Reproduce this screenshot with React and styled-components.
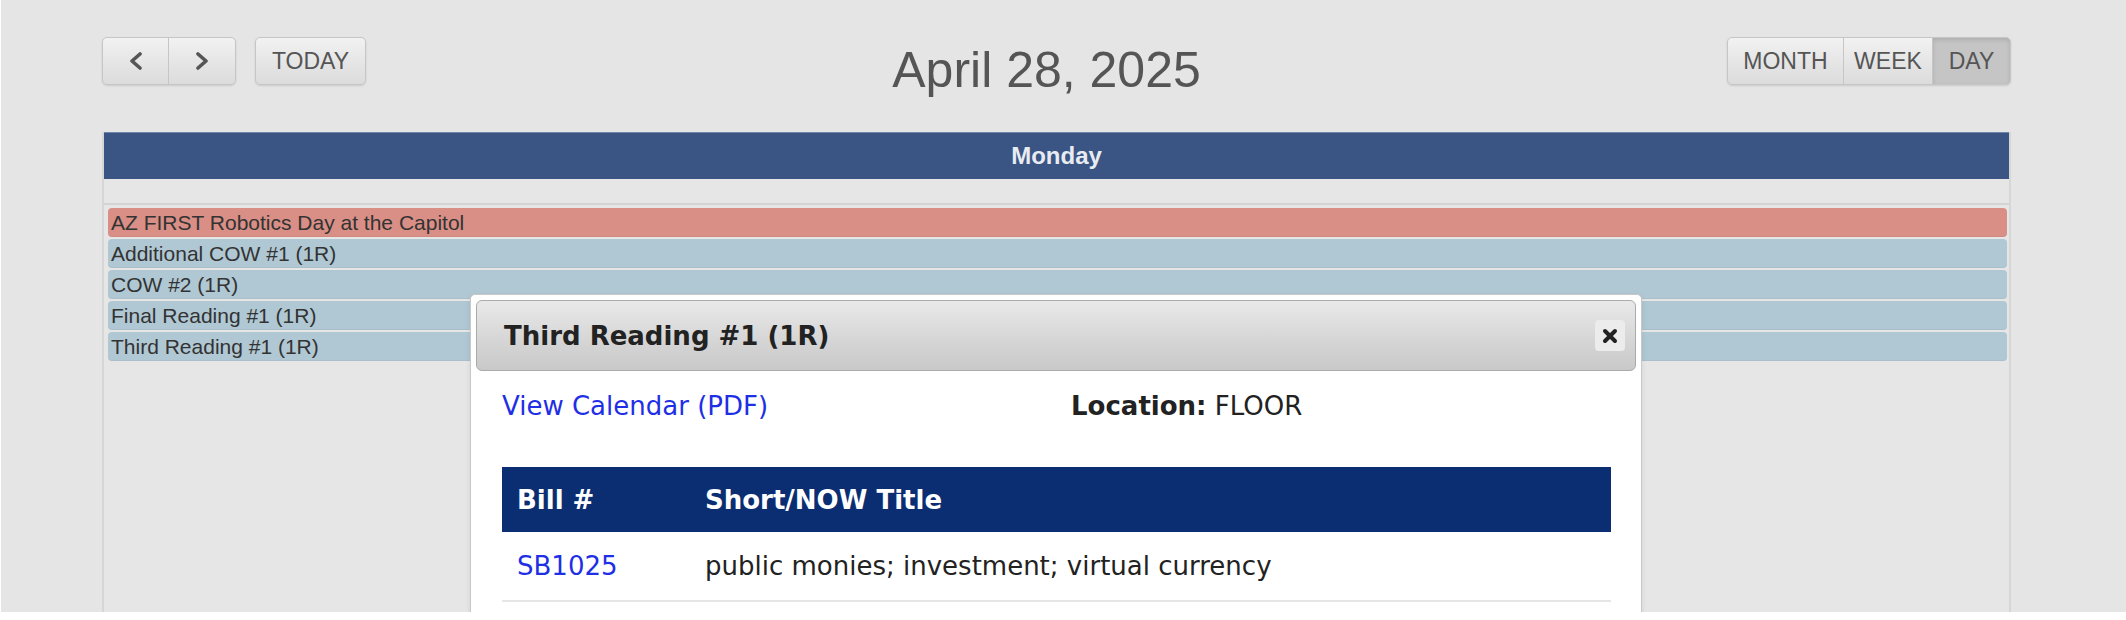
import React from "react";
import styled, { createGlobalStyle } from "styled-components";

const GlobalStyle = createGlobalStyle`
  html, body {
    margin: 0;
    padding: 0;
    background: #ffffff;
  }
  body {
    font-family: "Liberation Sans", Arial, sans-serif;
  }
`;

const events = [
  { title: "AZ FIRST Robotics Day at the Capitol", kind: "red" },
  { title: "Additional COW #1 (1R)", kind: "blue" },
  { title: "COW #2 (1R)", kind: "blue" },
  { title: "Final Reading #1 (1R)", kind: "blue" },
  { title: "Third Reading #1 (1R)", kind: "blue" },
];

const bills = [
  { number: "SB1025", title: "public monies; investment; virtual currency" },
];

const Chevron = ({ dir }) => (
  <svg width="16" height="18" viewBox="0 0 16 18">
    <polyline
      points={dir === "left" ? "12,2 4,9 12,16" : "4,2 12,9 4,16"}
      fill="none"
      stroke="#555"
      strokeWidth="3.6"
      strokeLinecap="round"
      strokeLinejoin="round"
    />
  </svg>
);

const CloseIcon = () => (
  <svg width="16" height="16" viewBox="0 0 16 16">
    <path
      d="M3 3 L13 13 M13 3 L3 13"
      stroke="#222"
      strokeWidth="4"
      strokeLinecap="round"
    />
  </svg>
);

const App = () => {
  return (
    <Page>
      <GlobalStyle />
      <Toolbar>
        <Left>
          <ButtonGroup>
            <Button $w={67}>
              <Chevron dir="left" />
            </Button>
            <Button $w={68}>
              <Chevron dir="right" />
            </Button>
          </ButtonGroup>
          <ButtonGroup>
            <Button $w={111}>TODAY</Button>
          </ButtonGroup>
        </Left>
        <Title>April 28, 2025</Title>
        <ButtonGroup>
          <Button $w={117}>MONTH</Button>
          <Button $w={90}>WEEK</Button>
          <Button $w={79} $active>
            DAY
          </Button>
        </ButtonGroup>
      </Toolbar>

      <Calendar>
        <DayHeader>Monday</DayHeader>
        <AllDayRow />
        <EventList>
          {events.map((ev) => (
            <EventBar key={ev.title} $kind={ev.kind}>
              {ev.title}
            </EventBar>
          ))}
        </EventList>
      </Calendar>

      <Modal>
        <ModalHeader>
          <ModalTitle>Third Reading #1 (1R)</ModalTitle>
          <CloseButton aria-label="close">
            <CloseIcon />
          </CloseButton>
        </ModalHeader>
        <ModalBody>
          <InfoRow>
            <Link href="#">View Calendar (PDF)</Link>
            <span>
              <strong>Location:</strong> FLOOR
            </span>
          </InfoRow>
          <BillTable>
            <colgroup>
              <col style={{ width: "188px" }} />
              <col />
            </colgroup>
            <thead>
              <tr>
                <Th>Bill #</Th>
                <Th>Short/NOW Title</Th>
              </tr>
            </thead>
            <tbody>
              {bills.map((b) => (
                <tr key={b.number}>
                  <Td>
                    <Link href="#">{b.number}</Link>
                  </Td>
                  <Td>{b.title}</Td>
                </tr>
              ))}
            </tbody>
          </BillTable>
        </ModalBody>
      </Modal>
    </Page>
  );
};

const Page = styled.div`
  position: relative;
  height: 612px;
  margin-left: 1px;
  box-sizing: border-box;
  padding: 37px 115px 0 101px;
  background: #e5e5e5;
  overflow: hidden;
  display: flex;
  flex-direction: column;
`;

const Toolbar = styled.div`
  display: flex;
  justify-content: space-between;
  align-items: flex-start;
  height: 48px;
`;

const Left = styled.div`
  display: flex;
  gap: 19px;
`;

const ButtonGroup = styled.div`
  display: flex;
  border-radius: 5px;
  box-shadow: 0 1px 2px rgba(0, 0, 0, 0.12);
`;

const Button = styled.button`
  width: ${(p) => p.$w}px;
  height: 48px;
  box-sizing: border-box;
  display: flex;
  align-items: center;
  justify-content: center;
  padding: 0;
  border: 1px solid #c6c6c6;
  background: ${(p) =>
    p.$active
      ? "#c5c5c5"
      : "linear-gradient(to bottom, #f2f2f2 0%, #e4e4e4 60%, #dcdcdc 100%)"};
  box-shadow: ${(p) =>
    p.$active ? "inset 0 2px 4px rgba(0, 0, 0, 0.12)" : "none"};
  color: #555;
  font-family: "Liberation Sans", Arial, sans-serif;
  font-size: 23px;
  cursor: pointer;
  & + & {
    margin-left: -1px;
  }
  &:first-child {
    border-radius: 5px 0 0 5px;
  }
  &:last-child {
    border-radius: 0 5px 5px 0;
  }
  &:only-child {
    border-radius: 5px;
  }
`;

const Title = styled.h2`
  margin: 8px 0 0;
  font-family: "Liberation Sans", Arial, sans-serif;
  font-size: 50px;
  line-height: 50px;
  font-weight: normal;
  color: #555;
`;

const Calendar = styled.div`
  flex: 1;
  margin-top: 47px;
  border-left: 2px solid #d6d6d6;
  border-right: 2px solid #d6d6d6;
  background: #e6e6e6;
  display: flex;
  flex-direction: column;
`;

const DayHeader = styled.div`
  height: 47px;
  display: flex;
  align-items: center;
  justify-content: center;
  background: #3a5583;
  border-top: 1px solid #6f86ab;
  box-sizing: border-box;
  color: #e8ecf2;
  font-size: 24px;
  font-weight: bold;
`;

const AllDayRow = styled.div`
  height: 24px;
  border-bottom: 2px solid #d4d4d4;
`;

const EventList = styled.div`
  display: flex;
  flex-direction: column;
  gap: 2px;
  padding: 3px 2px 0 4px;
`;

const EventBar = styled.div`
  height: 29px;
  line-height: 29px;
  padding-left: 3px;
  border-radius: 4px;
  background: ${(p) => (p.$kind === "red" ? "#d98f86" : "#b0c8d3")};
  box-shadow: inset 0 -1px 0 rgba(0, 0, 0, 0.04);
  color: #333;
  font-size: 21px;
  white-space: nowrap;
`;

const Modal = styled.div`
  position: absolute;
  left: 469px;
  top: 294px;
  width: 1172px;
  box-sizing: border-box;
  padding: 5px;
  background: #ffffff;
  border: 1px solid #c8c8c8;
  border-radius: 5px;
  box-shadow: 0 2px 6px rgba(0, 0, 0, 0.08);
  font-family: "DejaVu Sans", Verdana, sans-serif;
  color: #222;
`;

const ModalHeader = styled.div`
  height: 71px;
  box-sizing: border-box;
  display: flex;
  align-items: center;
  justify-content: space-between;
  padding: 0 10px 0 27px;
  border: 1px solid #aaaaaa;
  border-radius: 6px;
  background: linear-gradient(to bottom, #e9e9e9 0%, #d6d6d6 55%, #c9c9c9 100%);
`;

const ModalTitle = styled.span`
  font-size: 26px;
  font-weight: bold;
  color: #222;
`;

const CloseButton = styled.button`
  width: 30px;
  height: 31px;
  padding: 0;
  border: none;
  border-radius: 4px;
  background: #ececec;
  display: flex;
  align-items: center;
  justify-content: center;
  cursor: pointer;
`;

const ModalBody = styled.div`
  padding: 20px 25px 60px 26px;
`;

const InfoRow = styled.div`
  display: grid;
  grid-template-columns: 569px 1fr;
  font-size: 26px;
  line-height: 30px;
  strong {
    font-weight: bold;
  }
`;

const Link = styled.a`
  color: #1f2fe6;
  text-decoration: none;
`;

const BillTable = styled.table`
  width: 100%;
  margin-top: 46px;
  border-collapse: collapse;
  table-layout: fixed;
  font-size: 26px;
`;

const Th = styled.th`
  height: 65px;
  padding: 0 15px;
  background: #0b2e72;
  color: #ffffff;
  text-align: left;
  font-weight: bold;
`;

const Td = styled.td`
  height: 68px;
  padding: 0 15px;
  border-bottom: 2px solid #e6e6e6;
  color: #222;
`;

export default App;
